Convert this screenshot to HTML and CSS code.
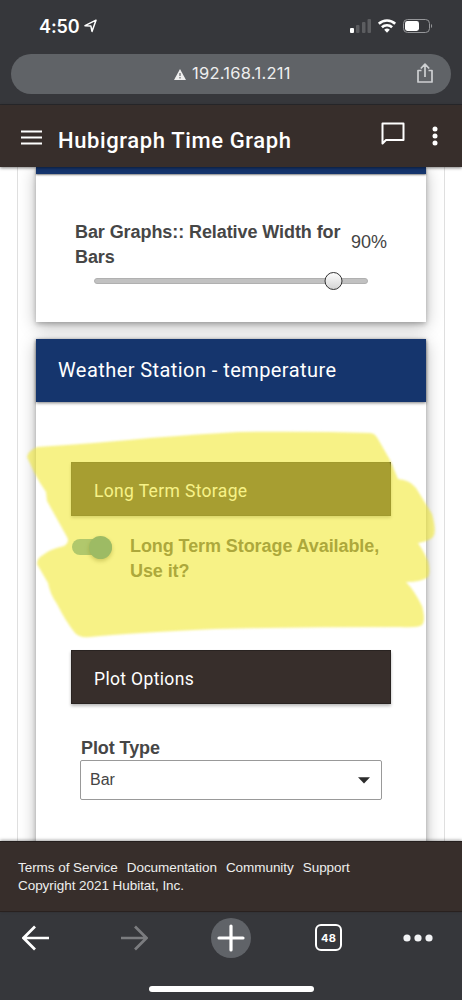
FILE: index.html
```html
<!DOCTYPE html>
<html lang="en">
<head>
<meta charset="utf-8">
<title>Hubigraph Time Graph</title>
<link rel="stylesheet" href="styles.css">
</head>
<body>
<div class="phone">
  <header class="browser">
    <div class="status">
      <span class="time">4:50</span>
      <svg class="location" width="14" height="14" viewBox="0 0 14 14"><path d="M1 6.7 12 1.2 8 12.4 6.9 7.1Z" fill="none" stroke="#fff" stroke-width="1.5" stroke-linejoin="round"/></svg>
      <svg class="indicators" width="84" height="18" viewBox="0 0 84 18">
        <rect x="0" y="10" width="4" height="5" rx="1" fill="#fff"/>
        <g fill="#5c5d60"><rect x="6" y="7" width="3.5" height="8" rx="1"/><rect x="12" y="4" width="3.5" height="11" rx="1"/><rect x="17.5" y="1" width="3.5" height="14" rx="1"/></g>
        <g fill="none" stroke="#fff" stroke-width="2.600"><path d="M28.800 5.800a12 12 0 0 1 16.400 0"/><path d="M31.900 9.300a7.400 7.400 0 0 1 10.200 0"/></g>
        <path d="M34.2 11.800a4.200 4.200 0 0 1 5.600 0L37 14.800Z" fill="#fff"/>
        <rect x="53.5" y="1.500" width="26" height="13" rx="4" fill="none" stroke="#96979a"/>
        <rect x="55" y="3" width="14" height="10" rx="2.400" fill="#fff"/><path d="M81 6c1.500.5 1.500 3.500 0 4Z" fill="#96979a"/>
      </svg>
    </div>
    <div class="address">
      <svg class="warning" width="12" height="11" viewBox="0 0 12 11"><path d="M6 0 12 11H0Z" fill="#eee"/><path d="M6 4v3M6 8v1.400" stroke="#66686b" stroke-width="1.200"/></svg>
      <span class="url">192.168.1.211</span>
      <svg class="share" width="18" height="22" viewBox="0 0 18 22"><path d="M5.500 8.500H2V20h14V8.500h-3.500M9 15V2.500M4.800 6.500 9 2.200 13.200 6.500" fill="none" stroke="#ced0d2" stroke-width="1.700" stroke-linejoin="round"/></svg>
    </div>
  </header>
  <div class="appbar">
    <svg class="menu" width="21" height="15" viewBox="0 0 21 15"><path d="M0 1.500h21M0 7.500h21M0 13.500h21" stroke="#fff" stroke-width="2"/></svg>
    <h1 class="title">Hubigraph Time Graph</h1>
    <svg class="chat" width="24" height="24" viewBox="0 0 24 24"><path d="M1.500 1.500h21v16.500H5L1.500 21.500Z" fill="none" stroke="#fff" stroke-width="2" stroke-linejoin="round"/></svg>
    <svg class="kebab" width="6" height="20" viewBox="0 0 6 20"><g fill="#fff"><circle cx="3" cy="3" r="2.500"/><circle cx="3" cy="10" r="2.500"/><circle cx="3" cy="17" r="2.500"/></g></svg>
  </div>
  <main class="content">
    <div class="page">
      <section class="card card-first">
        <div class="card-edge"></div>
        <div class="range">
          <div class="range-head"><label class="label range-label">Bar Graphs:: Relative Width for<br>Bars</label><output class="percent">90%</output></div>
          <svg class="slider" width="274" height="20" viewBox="0 0 274 20">
            <defs><linearGradient id="knob" x1="0" y1="0" x2="0" y2="1"><stop stop-color="#fff"/><stop offset="1" stop-color="#d4d4d4"/></linearGradient></defs>
            <rect x=".5" y="7.500" width="273" height="5" rx="2.500" fill="#c1c1c1" stroke="#b0b0b0"/><circle cx="239.500" cy="10" r="8.500" fill="url(#knob)" stroke="#333"/>
          </svg>
        </div>
      </section>
      <section class="card card-second">
        <h2 class="card-title">Weather Station - temperature</h2>
        <div class="card-body">
          <h3 class="bar">Long Term Storage</h3>
          <div class="storage">
            <span class="toggle"><span class="knob"></span></span>
            <span class="label storage-label">Long Term Storage Available,<br>Use it?</span>
          </div>
          <h3 class="bar">Plot Options</h3>
          <div class="field">
            <span class="label plot-label">Plot Type</span>
            <div class="select"><span class="value">Bar</span><svg width="12" height="7" viewBox="0 0 12 7"><path d="M0 .3h12L6 6.500Z" fill="#2c2c2c"/></svg></div>
          </div>
        </div>
      </section>
    </div>
    <svg class="marker" width="462" height="674" viewBox="0 167 462 674">
      <defs><filter id="soft" x="-5%" y="-5%" width="110%" height="110%" color-interpolation-filters="sRGB"><feGaussianBlur stdDeviation="1.300"/></filter></defs>
      <path filter="url(#soft)" fill="#f1e936" fill-opacity=".6" d="M27 457Q28 451 37 447Q100 443 150 438Q200 434 238 432Q310 431 370 433Q375 433 378 439L390 460L398 479Q410 480 416 488L432 514Q437 532 433 537Q429 541 418 543Q423 550 428 561Q431 572 428 577Q422 582 406 582Q414 590 422 606Q426 621 422 625Q418 628 400 627Q300 627 215 629Q130 633 90 637Q79 638 75 633Q66 622 57 604Q50 594 48 583L37 564Q37 558 43 555Q50 549 64 546Q70 542 67 537L47 501L46 492Q39 482 34 472Z"/>
    </svg>
  </main>
  <footer class="footer">
    <nav class="links"><a>Terms of Service</a><a>Documentation</a><a>Community</a><a>Support</a></nav>
    <p class="copyright">Copyright 2021 Hubitat, Inc.</p>
  </footer>
  <div class="toolbar">
    <div class="tools">
      <svg width="28" height="26" viewBox="0 0 28 26"><path d="M27 13H2M13 1.500 1.500 13 13 24.500" fill="none" stroke="#fff" stroke-width="2.700"/></svg>
      <svg class="forward" width="28" height="26" viewBox="0 0 28 26"><path d="M1 13h25M15 1.500 26.500 13 15 24.500" fill="none" stroke="#7b7c7f" stroke-width="2.700"/></svg>
      <svg class="plus" width="40" height="40" viewBox="0 0 40 40"><circle cx="20" cy="20" r="20" fill="#606368"/><path d="M20 8v24M8 20h24" stroke="#fff" stroke-width="3.200" stroke-linecap="round"/></svg>
      <span class="tabs">48</span>
      <svg class="more" width="30" height="8" viewBox="0 0 30 8"><g fill="#f2f3f5"><circle cx="4" cy="4" r="3.600"/><circle cx="15" cy="4" r="3.600"/><circle cx="26" cy="4" r="3.600"/></g></svg>
    </div>
    <div class="home"></div>
  </div>
</div>
</body>
</html>
```
FILE: styles.css
```css
* { box-sizing: border-box; }
body { margin: 0; font-family: "Liberation Sans", Arial, sans-serif; }
h1, h2, h3, p { margin: 0; }
svg { display: block; flex: none; }
.phone { width: 462px; height: 1000px; display: flex; flex-direction: column; overflow: hidden; background: #fff; }
.browser { height: 105px; flex: none; background: #36373b; border-bottom: 1px solid #29292c; padding: 18px 11px 0; }
.status { height: 36px; display: flex; align-items: flex-start; padding-left: 28px; }
.time { width: 42px; font: 600 18px/18px Inter, sans-serif; letter-spacing: -.1px; color: #fff; white-space: nowrap; }
.location { margin: 1px 0 0 3px; }
.indicators { margin: 0 17px 0 auto; }
.address { height: 40px; border-radius: 20px; background: #606367; display: flex; align-items: center; padding: 0 17px 0 163px; }
.url { margin: 0 0 2px 6px; font: 400 16.5px/36px Inter, sans-serif; letter-spacing: .25px; color: #eee; white-space: nowrap; }
.warning { margin-top: 1px; }
.share { margin-left: auto; margin-bottom: 3px; }
.appbar { position: relative; z-index: 2; height: 62px; flex: none; background: #372e2b; color: #fff; display: flex; align-items: flex-start; padding: 0 24px 0 21px; box-shadow: 0 1px 3px rgba(0,0,0,.5); }
.menu { margin-top: 25px; }
.title { margin: 21px 0 0 16px; font: 500 22px/30px Roboto, sans-serif; letter-spacing: .61px; white-space: nowrap; }
.chat { margin: 17px 0 0 auto; }
.kebab { margin: 21px 0 0 27px; }
.content { height: 674px; flex: none; position: relative; overflow: hidden; }
.page { width: 428px; height: 674px; margin-left: 17px; padding: 0 18px; border: solid #dfdfdf; border-width: 0 1px; overflow: hidden; }
.card { width: 390px; background: #fff; box-shadow: 0 4px 16px rgba(0,0,0,.27), 0 2px 5px rgba(0,0,0,.25); }
.card-first { height: 155px; }
.card-edge { height: 7px; background: #15356d; box-shadow: 0 1px 2px rgba(0,0,0,.5); }
.range { padding: 46px 0 0 39px; }
.range-head { display: flex; align-items: flex-start; }
.label { font-weight: 700; font-size: 18px; line-height: 25px; letter-spacing: -.08px; color: #464646; white-space: nowrap; }
.range-label { width: 276px; }
.percent { margin-top: 10px; font-size: 18px; line-height: 25px; color: #444; }
.slider { margin: 1px 0 0 19px; }
.card-second { height: 520px; margin-top: 17px; }
.card-title { height: 63px; background: #15356d; color: #fff; padding-left: 22px; font: 400 20px/62px Roboto, sans-serif; letter-spacing: .43px; box-shadow: 0 1px 3px rgba(0,0,0,.5); }
.card-body { padding: 60px 35px 0 35px; }
.bar { height: 54px; background: #372e2b; border: 1px solid #292321; color: #fff; padding-left: 22px; font: 400 17.5px/57px Roboto, sans-serif; letter-spacing: .35px; box-shadow: 0 2px 3px rgba(0,0,0,.28); }
.storage { height: 134px; display: flex; align-items: flex-start; padding-top: 18px; }
.toggle { width: 40px; height: 16px; margin: 5px 18px 0 1px; border-radius: 8px; background: #5096be; display: flex; justify-content: flex-end; align-items: center; }
.knob { width: 23px; height: 23px; flex: none; border-radius: 50%; background: #1e76aa; box-shadow: 0 2px 4px rgba(0,0,0,.4); }
.field { margin: 32px 0 0 9px; width: 302px; }
.plot-label { display: block; line-height: 24px; padding-left: 1px; }
.select { height: 40px; border: 1px solid #999; border-radius: 2px; display: flex; align-items: center; justify-content: space-between; padding: 0 11px 0 9px; }
.value { font-size: 16px; line-height: 38px; color: #444; }
.marker { position: absolute; left: 0; top: 0; pointer-events: none; }
.footer { height: 71px; flex: none; position: relative; background: #372e2b; border-top: 1px solid #241e1d; border-bottom: 1px solid #29211f; box-shadow: 0 -1px 3px rgba(0,0,0,.35); padding: 17px 18px 0; color: #eee; font-size: 13.5px; line-height: 18px; letter-spacing: -.05px; }
.links { display: flex; gap: 9px; white-space: nowrap; }
.toolbar { height: 88px; flex: none; background: #36373b; display: flex; flex-direction: column; justify-content: space-between; align-items: center; padding: 5px 0 8px; }
.tools { width: 462px; height: 41px; display: flex; align-items: center; padding-left: 22px; }
.forward { margin-left: 70px; }
.plus { margin-left: 63px; }
.tabs { width: 27px; height: 27px; margin-left: 64px; flex: none; border: 2.5px solid #fff; border-radius: 6px; display: flex; align-items: center; justify-content: center; color: #fff; font: 700 11px/22px Inter, sans-serif; letter-spacing: .3px; }
.more { margin-left: 61px; }
.home { width: 165px; height: 6px; border-radius: 3px; background: #fff; }
```
